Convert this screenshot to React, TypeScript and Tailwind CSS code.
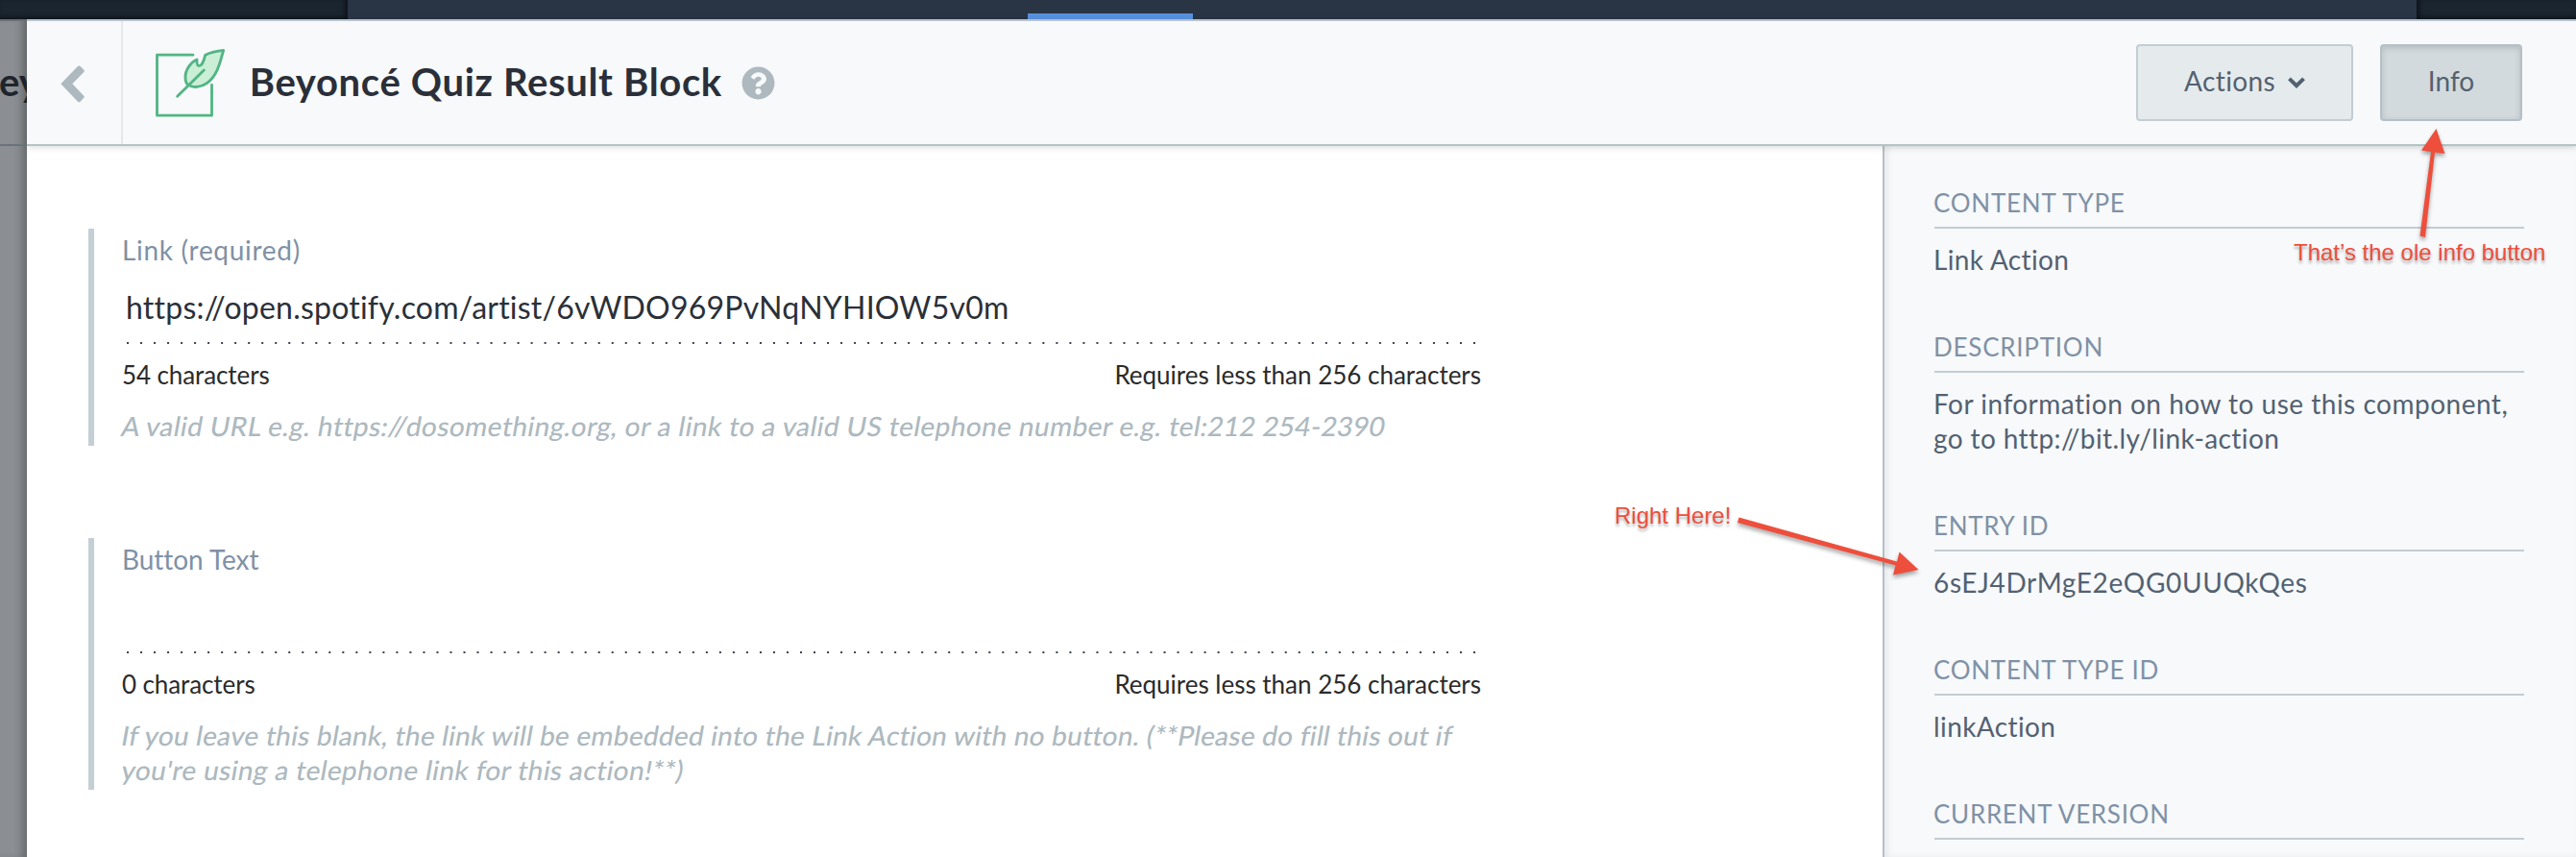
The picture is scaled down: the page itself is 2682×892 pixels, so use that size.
import type { ReactNode } from "react";

function LeafIcon() {
  return (
    <svg viewBox="480 145 230 230" className="h-[76.7px] w-[76.7px]" fill="none" stroke="#52b584" strokeWidth="8.500" strokeLinecap="round" strokeLinejoin="round">
      <path d="M603 172.500H490.500V361.500H661.500V266" />
      <path d="M698 158C676 160 657 165 641 173C637 192 629 207 621 207C614 206 615 197 615 187C596 195 578 219 579 243C579 254 582 264 590 267C602 276 628 274 646 261C680 236 687 196 698 158Z" fill="#caefd6" />
      <path d="M637 220L554 302" />
    </svg>
  );
}

function Field({ label, value, count, children }: { label: ReactNode; value?: ReactNode; count: ReactNode; children: ReactNode }) {
  return (
    <section className="flex w-[1450px] flex-col border-l-[6px] border-[#c3cfd5] pt-1 pb-[3px] pl-[29px]">
      <label className="h-9 text-[28px] leading-9 text-[#8091a5]">{label}</label>
      <div className="mt-[22px] h-10 pl-1 text-[32px] leading-10 text-[#2a3039]">{value}</div>
      <svg className="mt-4 ml-[5px] h-[2px] w-[1405px]">
        <line x1="0" y1="1" x2="1405" y2="1" stroke="#3c4450" strokeWidth="2" strokeDasharray="2 12.020" />
      </svg>
      <div className="mt-4 flex h-8 justify-between text-[26px] leading-8 text-[#2b2b2b]">
        <span>{count}</span>
        <span className="tracking-[-0.01px]">Requires less than 256 characters</span>
      </div>
      <div className="mt-[19px] flex flex-col text-[28px] leading-9 font-medium whitespace-nowrap text-[#adb9bf]">{children}</div>
    </section>
  );
}

function Info({ title, children }: { title: ReactNode; children?: ReactNode }) {
  return (
    <section className="mb-14">
      <h3 className="border-b-2 border-[#c3cdd3] pt-px pb-[9px] text-[26px] leading-8 text-[#8091a5]">
        <span className="-ml-px">{title}</span>
      </h3>
      <div className="mt-[14px] -ml-px text-[28px] leading-9 whitespace-nowrap text-[#536171]">{children}</div>
    </section>
  );
}

export default function App() {
  return (
    <div className="relative flex h-[892px] w-[2682px] flex-col overflow-hidden bg-white font-['Lato',sans-serif] [font-variant-ligatures:none]">
      <nav className="flex h-5 shrink-0">
        <div className="w-[362px] bg-[#1b2530] shadow-[inset_-3px_-2px_5px_rgba(0,0,0,0.5)]" />
        <div className="flex w-[2154px] items-end bg-[#293445]">
          <div className="ml-[708px] h-[6px] w-[172px] bg-[#5890dc]" />
        </div>
        <div className="flex-1 bg-[#1b2530] shadow-[inset_3px_-2px_5px_rgba(0,0,0,0.5)]" />
      </nav>

      <div className="flex flex-1">
        <aside className="w-7 overflow-hidden bg-[#8b8f93] shadow-[inset_-9px_0_9px_-4px_rgba(0,0,0,0.25)]">
          <div className="h-[132px] border-t-2 border-b-2 border-t-[#6b7077] border-b-[#68757a] pt-[39px] text-[40px] leading-[48px] font-bold text-[#1e242d]">
            <span className="-ml-px">ey</span>
          </div>
        </aside>

        <main className="flex flex-1 flex-col">
          <header className="z-10 flex h-[132px] shrink-0 border-t-2 border-b-2 border-t-[#b8c4cf] border-b-[#b4c3c5] bg-[#f7f9fb] shadow-[0_2px_6px_rgba(0,0,0,0.12)]">
            <div className="flex w-[100px] items-center border-r-2 border-[#e5e8eb] pl-[35px]">
              <svg viewBox="190 205 76 116" className="mt-[3px] h-[38.7px] w-[25.3px]">
                <path d="M191 263L244 208Q248 205 252 208L263 219Q266 222 263 226L227 263L263 300Q266 303 263 306L252 318Q248 321 244 318Z" fill="#adb9bf" />
              </svg>
            </div>
            <div className="flex items-start pt-[26px] pl-8">
              <LeafIcon />
            </div>
            <h1 className="mt-[39px] ml-[23px] text-[40px] leading-[48px] font-bold tracking-[0.66px] whitespace-nowrap text-[#2a2f39]">Beyoncé Quiz Result Block</h1>
            <svg viewBox="0 0 512 512" className="mt-[46.5px] ml-5 h-[35px] w-[35px]" fill="#adb9bf">
              <path d="M504 256c0 137-111 248-248 248S8 393 8 256 119 8 256 8s248 111 248 248zM262.700 90c-54.500 0-89.300 23-116.500 63.800-3.500 5.300-2.400 12.400 2.700 16.300l34.700 26.300c5.200 3.900 12.600 3 16.700-2.100 17.900-22.700 30.100-35.800 57.300-35.800 20.400 0 45.700 13.100 45.700 33 0 15-12.400 22.700-32.500 34C247.100 238.500 216 254.900 216 296v4c0 6.600 5.400 12 12 12h56c6.600 0 12-5.400 12-12v-1.300c0-28.500 83.200-29.600 83.200-106.700 0-58-60.200-102-116.500-102zM256 338c-25.400 0-46 20.600-46 46s20.600 46 46 46 46-20.600 46-46-20.600-46-46-46z" />
            </svg>
            <div className="mt-6 mr-14 ml-auto flex h-20 gap-7 text-[28px] leading-9 text-[#536171]">
              <button className="flex w-[226px] items-center justify-center gap-[13px] rounded-[4px] border-2 border-[#c3cdd3] bg-[#e5ebed] pb-1 tracking-[0.38px]">
                Actions
                <svg viewBox="0 0 18 12" className="mt-1 h-3 w-[18px]" fill="none" stroke="#536171" strokeWidth="4">
                  <path d="M1.500 1.800L9 9.200L16.500 1.800" />
                </svg>
              </button>
              <button className="w-[148px] rounded-[4px] border-2 border-[#b5c0c8] bg-[#d3dadd] pb-1 shadow-[inset_0_2px_6px_rgba(0,0,0,0.15)]">Info</button>
            </div>
          </header>

          <div className="flex flex-1">
            <div className="flex w-[1932px] flex-col gap-24 pt-[86px] pl-16">
              <Field
                label={<span className="tracking-[0.7px]">Link (required)</span>}
                value={<span className="tracking-[0.22px]">https://open.spotify.com/artist/6vWDO969PvNqNYHIOW5v0m</span>}
                count={<span className="tracking-[-0.1px]">54 characters</span>}
              >
                <p className="-skew-x-[10deg] tracking-[0.4px]">A valid URL e.g. https://dosomething.org, or a link to a valid US telephone number e.g. tel:212 254-2390</p>
              </Field>
              <Field label={<span className="tracking-[-0.05px]">Button Text</span>} count={<span className="tracking-[-0.1px]">0 characters</span>}>
                <p className="-skew-x-[10deg] tracking-[0.24px]">If you leave this blank, the link will be embedded into the Link Action with no button. (**Please do fill this out if</p>
                <p className="-skew-x-[10deg] tracking-[0.37px]">you're using a telephone link for this action!**)</p>
              </Field>
            </div>

            <aside className="h-[740px] flex-1 overflow-hidden border-l-2 border-[#b5c0c8] bg-[#f7f9fb] pt-[42px] pr-[54px] pl-[52px] shadow-[inset_4px_0_6px_rgba(0,0,0,0.06)]">
              <Info title={<span className="tracking-[0.75px]">CONTENT TYPE</span>}>
                <span className="tracking-[0.35px]">Link Action</span>
              </Info>
              <Info title={<span className="tracking-[0.75px]">DESCRIPTION</span>}>
                <p className="tracking-[0.5px]">For information on how to use this component,</p>
                <p className="tracking-[0.4px]">go to http://bit.ly/link-action</p>
              </Info>
              <Info title={<span className="tracking-[0.7px]">ENTRY ID</span>}>
                <span className="tracking-[0.65px]">6sEJ4DrMgE2eQG0UUQkQes</span>
              </Info>
              <Info title={<span className="tracking-[0.72px]">CONTENT TYPE ID</span>}>
                <span className="tracking-[0.4px]">linkAction</span>
              </Info>
              <Info title={<span className="tracking-[0.7px]">CURRENT VERSION</span>} />
            </aside>
          </div>
        </main>
      </div>

      <svg viewBox="0 0 2682 892" className="pointer-events-none absolute inset-0 z-20 h-[892px] w-[2682px] drop-shadow-[0_3px_2px_rgba(0,0,0,0.35)]" fill="#ee4e3c">
        <path d="M1810.500 538.500L1809 544L1973.500 588.500L1971 598.500L1997.500 593L1977.500 574.500L1975 584.500Z" />
        <path d="M2519.500 245.500L2525 247L2535 158.500L2545.500 160L2536.500 134L2521 156.500L2531 158Z" />
      </svg>
      <div className="absolute top-[522px] left-[1681px] z-20 font-['Liberation_Sans',sans-serif] text-[24px] leading-[30px] whitespace-nowrap text-[#ee4e3c] [text-shadow:0_3px_3px_rgba(0,0,0,0.3)]">Right Here!</div>
      <div className="absolute top-[248px] left-[2388px] z-20 font-['Liberation_Sans',sans-serif] text-[24px] leading-[30px] whitespace-nowrap text-[#ee4e3c] [text-shadow:0_3px_3px_rgba(0,0,0,0.3)]">That’s the ole info button</div>
    </div>
  );
}
